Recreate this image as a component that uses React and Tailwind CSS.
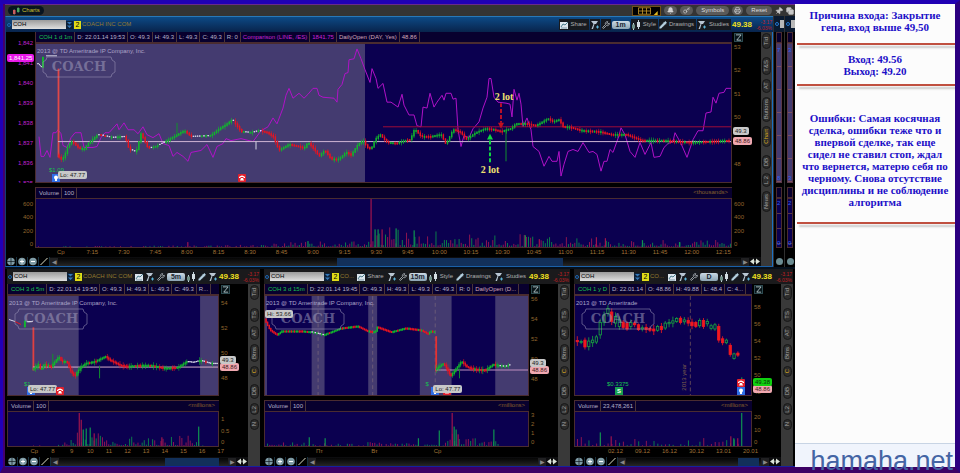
import React from 'react';
import { Bell, Copy, Key, Pencil, Pin, Printer, Wrench } from 'lucide-react';

const rand = (n) => {
  const v = Math.sin(n * 127.1 + 11.7) * 43758.5453;
  return v - Math.floor(v);
};

const at = (path, x) => {
  for (let i = 1; i < path.length; i++) {
    if (x <= path[i][0]) {
      const [x0, y0] = path[i - 1];
      const [x1, y1] = path[i];
      return y0 + ((y1 - y0) * (x - x0)) / (x1 - x0 || 1);
    }
  }
  return path[path.length - 1][1];
};

const mainPrice = [[58, 158], [61, 161], [64, 155], [67, 146], [71, 142], [78, 149], [83, 150], [88, 143], [97, 135], [110, 138], [124, 137], [128, 150], [135, 153], [140, 134], [147, 149], [155, 147], [163, 143], [175, 136], [183, 131], [190, 137], [210, 136], [217, 130], [225, 125], [231, 120], [235, 125], [240, 132], [250, 133], [258, 131], [266, 133], [272, 137], [278, 151], [288, 145], [297, 147], [303, 149], [307, 143], [313, 150], [318, 157], [324, 151], [330, 160], [338, 160], [345, 153], [350, 156], [357, 145], [362, 141], [366, 148], [370, 150], [374, 140], [379, 135], [386, 143], [395, 144], [405, 141], [410, 140], [412, 131], [415, 131], [420, 137], [430, 137], [440, 135], [445, 145], [452, 130], [460, 133], [465, 140], [475, 133], [485, 129], [492, 130], [500, 132], [510, 129], [515, 124], [525, 124], [535, 126], [547, 119], [552, 122], [558, 120], [562, 127], [570, 128], [580, 131], [597, 132], [610, 135], [625, 135], [640, 141], [660, 141], [675, 142], [690, 143], [710, 142], [730, 141]];

const comparison = [[38, 137], [40, 157], [43, 157], [46, 151], [49, 158], [52, 133], [55, 133], [57, 130], [60, 134], [62, 146], [66, 148], [70, 138], [74, 133], [80, 133], [83, 148], [92, 148], [96, 147], [100, 138], [104, 133], [108, 133], [116, 124], [118, 130], [123, 123], [127, 130], [133, 130], [137, 134], [142, 127], [146, 135], [152, 138], [158, 134], [162, 144], [168, 146], [172, 157], [176, 153], [182, 157], [187, 162], [190, 153], [200, 151], [206, 145], [212, 158], [216, 147], [222, 144], [225, 139], [230, 141], [240, 139], [252, 142], [260, 131], [267, 127], [272, 118], [276, 124], [282, 108], [285, 95], [288, 88], [292, 98], [298, 93], [303, 98], [307, 94], [312, 88], [316, 88], [318, 95], [322, 97], [333, 98], [336, 102], [337, 89], [341, 84], [344, 73], [347, 72], [348, 59], [353, 58], [356, 48], [360, 58], [364, 69], [369, 82], [371, 68], [375, 78], [377, 88], [382, 83], [386, 102], [390, 102], [397, 107], [401, 94], [403, 105], [408, 115], [413, 115], [416, 126], [420, 127], [422, 107], [426, 108], [429, 93], [433, 107], [436, 102], [441, 95], [443, 100], [445, 93], [450, 93], [452, 99], [455, 98], [457, 130], [460, 147], [463, 136], [468, 138], [472, 129], [478, 122], [482, 108], [486, 97], [488, 78], [490, 78], [493, 97], [497, 102], [505, 103], [509, 104], [511, 117], [513, 89], [516, 100], [518, 93], [520, 104], [522, 127], [526, 118], [530, 130], [532, 147], [538, 152], [543, 167], [548, 157], [551, 162], [556, 162], [558, 152], [560, 177], [563, 165], [567, 152], [572, 150], [577, 152], [582, 143], [588, 153], [592, 152], [596, 155], [600, 172], [603, 162], [606, 162], [609, 150], [612, 153], [618, 136], [620, 128], [624, 135], [629, 152], [634, 158], [639, 143], [644, 155], [650, 143], [653, 158], [659, 157], [663, 148], [667, 144], [672, 142], [674, 133], [680, 144], [686, 158], [692, 140], [697, 131], [702, 131], [705, 113], [710, 112], [712, 97], [715, 103], [718, 93], [723, 92], [725, 88], [730, 88]];

const fivePrice = [[33, 369], [38, 365], [40, 371], [43, 365], [47, 366], [50, 368], [55, 361], [58, 357], [61, 362], [66, 362], [70, 372], [74, 377], [79, 369], [85, 364], [95, 362], [105, 357], [110, 361], [120, 366], [127, 367], [140, 366], [150, 366], [165, 369], [178, 368], [187, 362], [193, 363], [200, 361], [210, 364], [218, 364]];

const fifteenBefore = [[264, 322], [268, 330], [275, 335], [280, 331], [300, 331], [310, 332], [322, 335], [335, 330], [340, 328], [356, 326], [366, 331], [374, 332], [376, 327], [390, 332], [405, 328], [420, 330], [427, 334], [430, 331], [434, 332]];
const fifteenAfter = [[436, 369], [443, 364], [447, 371], [450, 377], [455, 370], [461, 362], [467, 368], [475, 370], [485, 371], [493, 365], [497, 366], [505, 367], [511, 365]];

// top, bottom, direction of each daily body
const daily = [[223, 227, 0], [226, 229, 1], [222, 243, 0], [225, 242, 1], [222, 230, 1], [212, 228, 1], [168, 206, 1], [145, 168, 1], [125, 140, 1], [136, 165, 0], [150, 170, 1], [160, 180, 1], [167, 183, 0], [170, 188, 0], [168, 180, 1], [170, 175, 0], [175, 190, 0], [184, 188, 1], [183, 190, 0], [186, 192, 0], [188, 194, 0], [180, 192, 1], [180, 190, 0], [170, 185, 1], [168, 172, 1], [163, 170, 1], [156, 165, 1], [155, 168, 0], [160, 166, 1], [162, 170, 0], [167, 178, 0], [168, 180, 0], [162, 178, 1], [162, 180, 0], [165, 172, 1], [178, 186, 1], [175, 188, 1], [180, 222, 0], [218, 230, 0], [222, 230, 1], [238, 266, 0], [264, 278, 1], [262, 268, 0]];

const GREEN = '#12b52e';
const RED = '#e81420';

const Candles = ({ path, step = 2.1, seed = 1, wild = 2.5, whiteFrom = 0, whiteTo = 0 }) => {
  const items = [];
  const end = path[path.length - 1][0];
  let n = 0;
  for (let x = path[0][0]; x <= end; x += step, n++) {
    const y0 = at(path, x - step);
    const y1 = at(path, x);
    const r = rand(n + seed * 53);
    const slope = y1 - y0 + (r - 0.5) * 1.6;
    const quiet = x > whiteFrom && x < whiteTo && r > 0.35 && Math.abs(y1 - y0) < 1.2;
    const color = quiet ? '#d8d8e8' : slope < 0 ? GREEN : RED;
    const top = Math.min(y0, y1) - 0.8;
    const h = quiet ? 1.2 : Math.max(2, Math.abs(y1 - y0) + 1.2);
    const wick = quiet ? 0 : rand(n * 3 + seed) * wild;
    items.push(
      <g key={n} fill={color}>
        <rect x={x - 0.7} y={top} width="1.5" height={h} />
        <rect x={x - 0.2} y={top - wick} width="0.6" height={h + wick * 2} />
      </g>
    );
  }
  return <>{items}</>;
};

const Plot = ({ box, children }) => (
  <svg viewBox={box} preserveAspectRatio="none" className="block h-full w-full" aria-hidden="true">
    {children}
  </svg>
);

const Bars = ({ width, height, step, shape, peaks = [], seed = 1 }) => {
  const bars = [];
  let n = 0;
  for (let x = 2; x < width; x += step, n++) {
    const h = at(shape, x) * (0.1 + 1.1 * rand(n * 7 + seed) ** 2);
    if (h > 0.5) bars.push([x, h, rand(n + seed * 9) > 0.5]);
  }
  return (
    <Plot box={`0 0 ${width} ${height}`}>
      {bars.map(([x, h, up]) => (
        <rect key={x} x={x} y={height - h} width="1" height={h} fill={up ? '#0b7a4a' : '#8c1450'} />
      ))}
      {peaks.map(([x, h, up]) => (
        <rect key={`p${x}`} x={x} y={height - h} width="1.2" height={h} fill={up ? '#0f9450' : '#a0144c'} />
      ))}
    </Plot>
  );
};

const StudyIcon = () => (
  <svg viewBox="0 0 10 10" className="h-2.5 w-2.5 shrink-0">
    <path d="M1 1h7L6 4H4.500L3 9H1.500L3.500 4Z" fill="#b9c6d2" />
    <path d="M6 7h3M7.500 5.500v3" stroke="#5cb3d8" />
  </svg>
);

const StyleIcon = () => (
  <svg viewBox="0 0 10 10" className="h-2.5 w-2.5 shrink-0">
    <path d="M2.500 3v7M7.500 0v9" stroke="#c5d4dc" />
    <path d="M1 4.500h3v4H1z" fill="#6f8f86" />
    <path d="M6 2h3v5H6z" fill="#d3dde2" />
  </svg>
);

const ShareIcon = () => (
  <svg viewBox="0 0 10 10" className="h-2.5 w-2.5 shrink-0">
    <path d="M1 2h8v7H1z" fill="#dce6ee" />
    <path d="M2 7l2-3 2 1 3-3" fill="none" stroke="#4a7c8c" />
    <path d="M2 8h6" stroke="#7c98a4" />
  </svg>
);

const Phone = () => (
  <svg viewBox="0 0 8 8" className="block h-2 w-2">
    <rect width="8" height="8" rx="1" fill="#e3202c" />
    <path d="M1 3Q4 0 7 3V4H5.500V3h-3v1H1zM2 6.500 3 4h2l1 2.500z" fill="#fff" />
  </svg>
);

const Bulb = () => (
  <svg viewBox="0 0 8 8" className="block h-2 w-2">
    <rect width="8" height="8" fill="#2f6fe8" />
    <circle cx="4" cy="3.500" r="2" fill="#fff" />
    <path d="M3 5h2v2H3z" fill="#fff" />
  </svg>
);

const ToolButton = ({ icon, label, title }) => (
  <button title={title || label} className="flex h-[11px] min-w-2.5 items-center justify-center gap-0.5 bg-[#171a1f] text-[#b0b0b0]">
    {icon}
    {label && <span className="pr-0.5">{label}</span>}
  </button>
);

const Header = ({ id, company, interval, labels, blue }) => (
  <div className={`flex h-[15px] items-center ${blue ? 'bg-linear-to-b from-[#0c4a86] to-[#08244c]' : 'bg-[#1a1a1c]'}`}>
    <span className="mx-px h-1 w-1 shrink-0 rounded-full border border-[#1c67b4]" />
    <label htmlFor={id} className="sr-only">Symbol</label>
    <input id={id} defaultValue="COH" className="h-[9px] w-[54px] shrink-0 bg-linear-to-b from-[#9c9c9c] to-[#e0e0e0] px-px leading-[9px] text-black" />
    <button title="Symbols list" className="h-2 w-[7px] shrink-0 bg-[#0c2038]">
      <svg viewBox="0 0 7 8" className="h-2 w-[7px]"><path d="M1 1h5L3.500 3.500zM1 4.500h5L3.500 7z" fill="#3478b8" /></svg>
    </button>
    <span className="mx-px w-[7px] shrink-0 bg-[#e0dc18] text-center text-[7px] leading-[8px] text-black">2</span>
    <span className="min-w-0 flex-1 whitespace-nowrap text-[#967a30]">{company}</span>
    <div className="flex shrink-0 items-center gap-px">
      <ToolButton icon={<ShareIcon />} label={labels ? 'Share' : ''} title="Share" />
      <ToolButton icon={<StudyIcon />} title="Edit studies" />
      <ToolButton icon={<Wrench size={8} color="#d5dde2" />} title="Settings" />
      <button className="h-2 w-[18px] rounded-xs bg-linear-to-b from-[#cbd9e4] to-[#8ca4b4] text-center text-[7px] leading-[8px] font-bold text-[#182430]">{interval}</button>
      <ToolButton icon={<StyleIcon />} label={labels ? 'Style' : ''} title="Style" />
      <ToolButton icon={<Pencil size={8} color="#b8d4e4" fill="#b8d4e4" />} label={labels ? 'Drawings' : ''} title="Drawings" />
      <ToolButton icon={<StudyIcon />} label={labels ? 'Studies' : ''} title="Studies" />
    </div>
    <div className="flex w-[42px] shrink-0 items-center justify-between pl-px">
      <span className="text-[8px] font-bold text-[#f0e020]">49.38</span>
      <span className="pr-px text-right text-[5px] leading-[6px] text-[#c02024]">-3.17<br />-6.03%</span>
    </div>
  </div>
);

const Cells = ({ items }) => (
  <div className="flex h-[11px] min-w-0 overflow-hidden border-b border-l border-[#4a2c30] bg-[#08002e] pl-px whitespace-nowrap">
    {items.map(([text, color]) => (
      <span key={text} className={`border-r border-[#4a3438] px-0.5 leading-[10px] ${color || 'text-[#b4b0c8]'}`}>{text}</span>
    ))}
  </div>
);

const Axis = ({ values, className }) => (
  <div className={`flex flex-col justify-between overflow-hidden ${className}`}>
    {values.map((v) => <span key={v} className="block h-2 shrink-0 leading-[8px]">{v}</span>)}
  </div>
);

const Tabs = ({ items, blue }) => (
  <div className={`flex w-3 shrink-0 flex-col items-center gap-1 bg-[#393939] pt-px ${blue ? 'border-r border-[#1a70c4]' : ''}`}>
    {items.map(([name, height, active]) => (
      <button key={name} className={`flex w-[9px] items-center justify-center rounded-full border border-[#181818] bg-[#2c2c2c] leading-[7px] ${height} ${active ? 'text-[#d8a820]' : 'text-[#a4a4a4]'}`}>
        <span className="rotate-180 [writing-mode:vertical-rl]">{name}</span>
      </button>
    ))}
  </div>
);

const Corner = () => (
  <button title="Expand" className="ml-0.5 block h-[9px] w-[9px] border border-[#2c4a50] bg-[#081418]">
    <svg viewBox="0 0 8 8" className="block h-full w-full"><path d="M1 1h6L2 7h5" fill="none" stroke="#b8ccd0" /></svg>
  </button>
);

const ScrollRow = ({ thumb }) => (
  <div className="flex h-[9px] items-center bg-[#0c0c0e]">
    {['Crosshair', 'Zoom in', 'Zoom out', 'Line'].map((title, i) => (
      <button key={title} title={title} className="h-[9px] w-[11px] shrink-0 border-r border-[#18303c] bg-black">
        <svg viewBox="0 0 10 9" className="block h-full w-full">
          {i < 3 && <circle cx="5" cy="4.500" r="3.800" fill="#7f9ca6" />}
          {i === 0 && <path d="M5 0v9M1 4.500h8" stroke="#10181c" strokeWidth=".7" />}
          {i > 0 && i < 3 && <path d="M3 4.500h4" stroke="#fff" />}
          {i === 1 && <path d="M5 2.500v4" stroke="#fff" />}
          {i === 3 && <path d="M1.500 8 8.500 1" stroke="#e0e0c8" />}
        </svg>
      </button>
    ))}
    <button title="Scroll left" className="w-2 bg-[#202022] text-center leading-[8px] text-[#888]">◀</button>
    <div className={`flex h-2 flex-1 bg-linear-to-b from-[#060606] to-[#262626] ${thumb[0]}`}>
      {thumb[1] && <div className={`h-full bg-[#12305a] ${thumb[1]}`} />}
    </div>
    <button title="Scroll right" className="w-2 bg-[#202022] text-center leading-[8px] text-[#888]">▶</button>
    <button title="Fit" className="h-[9px] w-3">
      <svg viewBox="0 0 12 8" className="block h-full w-full"><path d="M1 4l4-3v2h2V1l4 3-4 3V5H5v2z" fill="#dce4d8" /><path d="M6 1v6" stroke="#000" /></svg>
    </button>
  </div>
);

const Logo = () => (
  <div className="absolute top-3 left-1.5 flex h-[22px] w-[74px] items-center justify-center">
    <svg viewBox="0 0 74 22" className="absolute h-full w-full">
      <path d="M5 1H69L70 4 73 6V16L70 18 69 21H5L4 18 1 16V6L4 4Z" fill="none" stroke="#9d96b8" strokeOpacity=".55" />
    </svg>
    <span className="font-['DejaVu_Serif'] text-[13px] leading-[14px] font-bold text-[#a8a4c0]/50">COACH</span>
  </div>
);

const Copyright = ({ short }) => (
  <span className="absolute top-[3px] left-px leading-[8px] whitespace-nowrap text-[#aca4c8]">
    2013 @ TD Ameritrade{short ? '' : ' IP Company, Inc.'}
  </span>
);

const Tag = ({ children, className }) => (
  <span className={`absolute rounded-xs px-0.5 leading-[8px] whitespace-nowrap ${className}`}>{children}</span>
);

const ChartPanel = ({ header, cells, left, right, tags, chart, chartHeight, volume, volHeight, volCell, volAxis, unit, leftVol, times, timesClass, thumb, tabs, blue, children }) => (
  <section className={`min-w-0 bg-black ${blue ? 'flex-1 border-t border-b border-l border-t-[#2878b8] border-b-[#1a60a8] border-l-[#123c74]' : 'border-b border-[#1420a0] px-0.5'}`}>
    <Header {...header} blue={blue} />
    <div className="flex">
      <div className="min-w-0 flex-1">
        <div className="flex">
          {left}
          <div className="min-w-0 flex-1">
            <Cells items={cells} />
            <div className={`relative overflow-hidden border border-[#4a2c30] bg-[#0b0050] ${chartHeight}`}>
              {chart}
              {children}
            </div>
          </div>
          <div className="relative w-[29px] shrink-0">
            <div className="flex h-[11px] items-center"><Corner /></div>
            {right}
            {tags}
          </div>
        </div>
        <div className="mt-1 flex">
          {leftVol}
          <div className="min-w-0 flex-1">
            <div className="relative border-t border-[#4a2c30]">
              <Cells items={[['Volume'], [volCell]]} />
              <span className="absolute top-0 right-1 leading-[9px] text-[#86602c]">&lt;{unit}&gt;</span>
            </div>
            <div className={`border border-t-0 border-[#4a2c30] bg-[#0b0050] ${volHeight}`}>{volume}</div>
          </div>
          <div className="w-[29px] shrink-0 pt-[11px]">{volAxis}</div>
        </div>
        <div className={`text-center leading-[9px] text-[#a07236] ${timesClass}`}>
          {times.map((t) => <span key={t}>{t}</span>)}
        </div>
        <ScrollRow thumb={thumb} />
      </div>
      <Tabs items={tabs} blue={blue} />
    </div>
  </section>
);

const MainChart = () => (
  <Plot box="35 43 695 140">
    <rect x="35" y="43" width="329" height="140" fill="#443b70" />
    <path d={'M' + comparison.map((p) => p.join(' ')).join('L')} fill="none" stroke="#b012c8" />
    <path d="M36 63h2l2 3h2M45 55h11" stroke="#d8d8e8" fill="none" />
    <path d="M42 67V56" stroke={GREEN} strokeWidth="2" />
    <path d="M57.500 68v90" stroke="#e04848" strokeWidth="1.800" />
    <path d="M57 142H730" stroke="#d0b4d4" />
    <path d="M382 127H730" stroke="#a00c38" />
    <path d="M255 142v8" stroke="#d8d8e8" />
    <path d="M505 130v32M176 123v14" stroke="#12902e" />
    <Candles path={mainPrice} whiteFrom={85} whiteTo={260} />
    <path d="M500 103v20" stroke="#b81028" strokeWidth="2" strokeDasharray="4 2" />
    <path d="M497 123h6l-3 6z" fill="#c01020" />
    <path d="M489 163v-22" stroke="#10d840" strokeWidth="2" strokeDasharray="4 2" />
    <path d="M486 140h6l-3-6z" fill="#10d840" />
  </Plot>
);

const FiveChart = () => (
  <Plot box="7 295 211 101">
    <path d="M7 295h71v101H7zM200 295h18v101h-18z" fill="#443b70" />
    <path d="M8 319l6 2M26 321h6" stroke="#d8d8e8" fill="none" />
    <path d="M14 321l6 3" stroke={RED} />
    <path d="M24 327v-7" stroke={GREEN} strokeWidth="2" />
    <path d="M32.500 327v44" stroke="#e04040" strokeWidth="1.800" />
    <path d="M32 367.500H218" stroke="#d8b0cc" />
    <path d="M99 366v13M52 354v12" stroke="#12902e" />
    <Candles path={fivePrice} step={1.6} seed={5} wild={3} whiteFrom={188} whiteTo={218} />
  </Plot>
);

const FifteenChart = () => (
  <Plot box="263 295 265 101">
    <path d="M263 295h2v101h-2zM310 295h13v101h-13zM367 295h9v101h-9zM419 295h32v101h-32zM495 295h33v101h-33z" fill="#443b70" />
    <path d="M316.500 295v101M371.500 295v101M434.500 295v101" stroke="#6a5a78" strokeDasharray="4 3" />
    <path d="M435.500 336v36" stroke="#e83030" strokeWidth="1.800" />
    <path d="M435 370.500H528" stroke="#c090c0" />
    <path d="M459 370v9" stroke="#12902e" />
    <Candles path={fifteenBefore} step={1.6} seed={3} wild={0.6} whiteFrom={309} whiteTo={322} />
    <Candles path={fifteenAfter} step={1.6} seed={8} wild={3} whiteFrom={495} whiteTo={512} />
  </Plot>
);

const DailyChart = () => (
  <Plot box="27 87 534 303">
    <path d="M377 87v303" stroke="#5c4458" strokeWidth="3" strokeDasharray="12 8" />
    {daily.map(([top, bottom, up], i) => {
      const x = 34 + i * 11.6;
      const h = bottom - top;
      const w = 3 + rand(i + 4) * 10;
      return (
        <g key={i} stroke={up ? '#18a040' : '#f01820'} strokeWidth="2.500" fill={up ? '#0b0050' : '#f01820'}>
          <path d={`M${x} ${top - w}V${bottom + w}`} />
          <rect x={x - 3.5} y={top} width="7" height={h} />
        </g>
      );
    })}
    <path d="M533 336v14" stroke="#18b040" strokeWidth="3" />
  </Plot>
);

const SmallTabs = [['Tid', 'h-[15px]'], ['TS', 'mt-1 h-3.5'], ['AT', 'h-3.5'], ['Btns', 'h-[18px]'], ['C', 'h-[11px]', true], ['DB', 'mt-[3px] h-[15px]'], ['L2', 'h-3'], ['N', 'h-[11px]']];
const MainTabs = [['Tid', 'h-4'], ['T&S', 'mt-1 h-[18px]'], ['AT', 'h-3.5'], ['Buttons', 'h-[25px]'], ['Chart', 'h-[21px]', true], ['DB', 'mt-1 h-3.5'], ['L 2', 'h-3.5'], ['News', 'h-[21px]']];

const Sliver = ({ low, high }) => (
  <div className="flex w-[11px] flex-col border-l border-[#303030] bg-black px-0.5 leading-[8px] text-[#2c60f0]">
    <div className="-mx-0.5 flex h-4 items-center bg-[#0a1a30] pl-px"><span className="h-1 w-1 rounded-full border border-[#2478d0]" /><span className="ml-px h-2 w-1 bg-[#b8b8b8]" /></div>
    <div className="h-[11px] border border-[#4a2c30] bg-[#08002e]" />
    <div className="flex h-[140px] flex-col justify-between border border-[#5a3848] bg-[repeating-linear-gradient(#443b70_0_22px,#7a5060_22px_23px)] pt-0.5">
      <span>{high}</span><span>{low}</span>
    </div>
    <div className="mt-1 h-[11px] border border-[#4a2c30] bg-[#08002e]" />
    <div className="flex h-[50px] flex-col justify-between border border-[#4a2c30] bg-[repeating-linear-gradient(#0b0050_0_14px,#5a3848_14px_15px)]">
      <span>2</span><span>0</span>
    </div>
    <div className="mt-[10px] h-[7px] w-[7px] rounded-full bg-[#6c8c92]" />
  </div>
);

const PillButton = ({ children, title, className }) => (
  <button title={title} className={`flex h-[9px] items-center justify-center rounded-full bg-[#5a5a5a] leading-[9px] text-[#dcdcdc] ${className}`}>{children}</button>
);

const TopBar = () => (
  <div className="flex h-[11px] items-center justify-between bg-[#343434] pl-[3px]">
    <button className="flex h-[9px] items-center gap-0.5 rounded-full bg-[#081420] px-1 text-[#d0c030]">
      <svg viewBox="0 0 8 8" className="h-2 w-2"><path d="M1 3h2.500v4H1z" fill="#e05050" /><path d="M5 1h2.500v4H5z" fill="#30b050" /><path d="M2.200 2v6M6.200 0v6" stroke="#888" strokeWidth=".6" /></svg>
      Charts
    </button>
    <div className="flex items-center gap-[3px] pr-px">
      <button title="Grid layout" className="h-[10px] w-[29px] border border-[#705018] bg-black">
        <svg viewBox="0 0 28 10" className="block h-full w-full"><path d="M4 1h15v8H4zM9 1v8M14 1v8M4 5h15" fill="none" stroke="#c89a2c" /><path d="M28 5v5h-5z" fill="#e0b820" /></svg>
      </button>
      <PillButton title="Alerts" className="w-[13px]"><Bell size={7} fill="#d0d0d0" /></PillButton>
      <PillButton title="Tools" className="w-[13px]"><Key size={7} /></PillButton>
      <PillButton className="px-[5px]">Symbols</PillButton>
      <PillButton title="Print" className="w-[11px]"><Printer size={7} /></PillButton>
      <PillButton className="px-[5px]">Reset</PillButton>
      <button title="Pin"><Pin size={8} color="#c8c8c8" fill="#c8c8c8" className="rotate-45" /></button>
      <button title="Detach"><Copy size={8} color="#c8c8c8" fill="#c8c8c8" /></button>
    </div>
  </div>
);

const Rule = () => <hr className="ml-0.5 h-0.5 border-0 bg-[#c05040] shadow-[2px_3px_2px_#c8c8c8]" />;

const Notes = () => (
  <aside className="flex w-40 shrink-0 flex-col overflow-x-clip bg-[#fcfcfc] text-center font-['Liberation_Serif'] text-[11px] leading-3 font-bold text-[#1c10c8]">
    <p className="px-2 pt-[5px] pb-2.5">Причина входа: Закрытие гепа, вход выше 49,50</p>
    <Rule />
    <p className="pt-2 pb-[7px]">Вход: 49.56<br />Выход: 49.20</p>
    <Rule />
    <p className="px-1.5 pt-[26px] pb-3.5">Ошибки: Самая косячная сделка, ошибки теже что и впервой сделке, так еще сидел не ставил стоп, ждал что вернется, матерю себя по черному. Снова отсутствие дисциплины и не соблюдение алгоритма</p>
    <Rule />
    <footer className="relative mt-auto h-6 border-t border-[#c8d4e4] bg-[#f0f4fc] pt-1">
      <a href="#" className="block pr-0.5 text-right font-['Liberation_Sans'] text-[27px] leading-[27px] font-normal text-[#4464a4]">hamaha.net</a>
    </footer>
  </aside>
);

const green = 'text-[#18c050]';
const axisText = 'text-[#92662e]';
const grayTag = 'bg-[#c8c8c8] text-[#202020]';
const pinkTag = 'bg-[#f0a8b0] text-[#401820]';

export default function App() {
  return (
    <div className="flex min-h-screen border-t-4 border-r-[5px] border-b-[6px] border-l-[3px] border-t-[#2000b4] border-r-[#2c0080] border-b-[#3c0064] border-l-[#2000b8] bg-[#44006c] pl-0.5 font-['Liberation_Sans',Arial,sans-serif] text-[6px] leading-[9px]">
      <main className="min-w-0 flex-1 border-t border-[#6a2a8a] bg-[#06101c]">
        <TopBar />
        <div className="flex">
          <ChartPanel
            blue
            header={{ id: 'main-symbol', company: 'COACH INC COM', interval: '1m', labels: true }}
            cells={[['COH 1 d 1m', green], ['D: 22.01.14 19:53'], ['O: 49.3'], ['H: 49.3'], ['L: 49.3'], ['C: 49.3'], ['R: 0'], ['Comparison (LINE, /ES)', 'text-[#c424d4]'], ['1841.75', 'text-[#c424d4]'], ['DailyOpen (DAY, Yes)', 'text-[#d0a8b8]'], ['48.86', 'text-[#d0a8b8]']]}
            left={
              <div className="relative w-[29px] shrink-0 overflow-hidden pt-[11px] text-right text-[#c020d0]">
                <Axis values={['1,842', '1,841', '1,840', '1,839', '1,838', '1,837', '1,836', '1,835']} className="-my-1 h-[148px] pr-0.5" />
                <Tag className="top-[22px] left-px bg-[#e818e8] text-white">1,841.25</Tag>
              </div>
            }
            right={<Axis values={[53, 52, 51, 50, 49, 48]} className={`h-[125px] pl-0.5 ${axisText}`} />}
            tags={<><Tag className={`top-[95px] left-px ${grayTag}`}>49.3</Tag><Tag className={`top-[105px] left-px ${pinkTag}`}>48.86</Tag></>}
            chartHeight="h-[140px]"
            chart={<MainChart />}
            volCell="100"
            unit="thousands"
            volHeight="h-[49px]"
            volume={
              <Bars width={694} height={49} step={2.1} seed={4}
                shape={[[0, 0.6], [150, 1.5], [230, 2], [235, 4], [270, 5], [330, 7], [345, 17], [385, 16], [420, 13], [460, 12], [520, 9], [600, 6], [694, 6]]}
                peaks={[[151, 5, 0], [271, 6, 1], [334, 49, 0], [338, 18, 1], [341, 18, 1], [345, 18, 0], [359, 19, 1], [377, 17, 1], [488, 12, 1], [502, 8, 0], [559, 10, 0], [568, 9, 0], [605, 7, 1], [642, 5, 1]]} />
            }
            leftVol={<div className={`w-[29px] shrink-0 pt-[11px] text-right ${axisText}`}><Axis values={[600, 400, 200, 0]} className="h-[50px] pt-0.5 pr-0.5" /></div>}
            volAxis={<Axis values={[600, 400, 200, 0]} className={`h-[50px] pt-0.5 pl-0.5 ${axisText}`} />}
            times={['Cp', '7:15', '7:30', '7:45', '8:00', '8:15', '8:30', '8:45', '9:00', '9:15', '9:30', '9:45', '10:00', '10:15', '10:30', '10:45', '11:00', '11:15', '11:30', '11:45', '12:00', '12:15']}
            timesClass="grid grid-cols-[repeat(22,1fr)] pl-[39px] pr-[22px]"
            thumb={['pl-[37%]', 'w-[56%]']}
            tabs={MainTabs}
          >
            <Copyright />
            <Logo />
            <span className="absolute top-[34%] left-[66%] font-['Liberation_Serif'] text-[10px] leading-3 font-bold text-[#f0e070]">2 lot</span>
            <span className="absolute bottom-1.5 left-[64%] font-['Liberation_Serif'] text-[10px] leading-3 font-bold text-[#f0e070]">2 lot</span>
            <span className={`absolute bottom-[7px] left-[13px] ${green}`}>$1.09</span>
            <div className="absolute bottom-0 left-4"><Bulb /></div>
            <Tag className={`bottom-[3px] left-[22px] ${grayTag}`}>Lo: 47.77</Tag>
            <div className="absolute bottom-0 left-[29%]"><Phone /></div>
          </ChartPanel>
          <Sliver high="7" low="8" />
          <Sliver high="3" low="3" />
        </div>
        <div className="mt-0.5 grid grid-cols-[257fr_310fr_223fr]">
          <ChartPanel
            header={{ id: 'five-symbol', company: 'COACH INC COM', interval: '5m' }}
            cells={[['COH 3 d 5m', green], ['D: 22.01.14 19:50'], ['O: 49.3'], ['H: 49.3'], ['L: 49.3'], ['C: 49.3'], ['R...']]}
            right={<Axis values={[54, 52, 50, 48]} className={`h-[87px] pt-1 pl-0.5 ${axisText}`} />}
            tags={<><Tag className={`top-[79px] left-px ${pinkTag}`}>48.86</Tag><Tag className={`top-[72px] left-px ${grayTag}`}>49.3</Tag></>}
            chartHeight="h-[101px]"
            chart={<FiveChart />}
            volCell="100"
            unit="millions"
            volHeight="h-[35px]"
            volume={
              <Bars width={211} height={35} step={2.1} seed={6}
                shape={[[0, 0.3], [50, 1], [65, 8], [75, 18], [95, 14], [110, 8], [150, 8], [185, 10], [195, 1], [211, 0]]}
                peaks={[[71, 34, 0], [73, 27, 0], [75, 17, 1], [78, 18, 1], [82, 19, 1], [86, 13, 0], [154, 9, 0], [191, 20, 1]]} />
            }
            volAxis={<Axis values={[1, 0.5, 0]} className={`h-[35px] pt-1 pl-0.5 ${axisText}`} />}
            times={['Cp', '8', '9', '10', '11', '12', '13', '14', '15', '16', '17']}
            timesClass="grid grid-cols-[repeat(11,1fr)] pb-px pl-[18px] pr-[18px]"
            thumb={['pl-[44%]', 'w-[86%]']}
            tabs={SmallTabs}
          >
            <Copyright />
            <Logo />
            <span className={`absolute bottom-1.5 left-4 ${green}`}>$1</span>
            <div className="absolute bottom-0 left-[19px]"><Bulb /></div>
            <Tag className={`bottom-0.5 left-5 ${grayTag}`}>Lo: 47.77</Tag>
            <div className="absolute bottom-0 left-12"><Phone /></div>
          </ChartPanel>
          <ChartPanel
            header={{ id: 'fifteen-symbol', company: 'CO...', interval: '15m', labels: true }}
            cells={[['COH 3 d 15m', green], ['D: 22.01.14 19:45'], ['O: 49.3'], ['H: 49.3'], ['L: 49.3'], ['C: 49.3'], ['R: 0'], ['DailyOpen (D...', 'text-[#d0a8b8]']]}
            right={<Axis values={[56, 54, 52, 50, 48]} className={`h-[88px] pl-0.5 ${axisText}`} />}
            tags={<><Tag className={`top-[82px] left-px ${pinkTag}`}>48.86</Tag><Tag className={`top-[75px] left-px ${grayTag}`}>49.3</Tag></>}
            chartHeight="h-[101px]"
            chart={<FifteenChart />}
            volCell="100"
            unit="millions"
            volHeight="h-[35px]"
            volume={
              <Bars width={265} height={35} step={2.3} seed={2}
                shape={[[0, 6], [20, 4], [60, 2.5], [100, 3.5], [140, 2.5], [180, 1], [186, 12], [200, 12], [215, 6], [232, 10], [236, 0.4], [265, 0]]}
                peaks={[[44, 9, 1], [60, 8, 1], [154, 8, 1], [175, 16, 1], [188, 34, 0], [190, 20, 1], [192, 17, 1], [194, 12, 0], [230, 17, 1]]} />
            }
            volAxis={<Axis values={[3, 2, 1, 0]} className={`h-[35px] pl-0.5 ${axisText}`} />}
            times={['Пт', 'Вт', 'Ср']}
            timesClass="grid grid-cols-[55fr_55fr_71fr] pb-px pl-7 pr-[85px]"
            thumb={['', '']}
            tabs={SmallTabs}
          >
            <Copyright />
            <Logo />
            <Tag className={`top-3.5 left-0 ${grayTag}`}>Hi: 53.66</Tag>
            <span className={`absolute bottom-1.5 left-[61%] ${green}`}>$</span>
            <div className="absolute bottom-0 left-[63%] flex gap-1"><Bulb /><Phone /></div>
            <Tag className={`bottom-0.5 left-[64%] ${grayTag}`}>Lo: 47.77</Tag>
          </ChartPanel>
          <ChartPanel
            header={{ id: 'daily-symbol', company: 'CO...', interval: 'D' }}
            cells={[['COH 1 y D', green], ['D: 22.01.14'], ['O: 48.86'], ['H: 49.88'], ['L: 48.4'], ['C: 4...']]}
            right={<Axis values={[58, 56, 54, 52, 50, 48]} className={`h-[101px] pt-2 pl-0.5 ${axisText}`} />}
            tags={<><Tag className={`top-[101px] left-px ${pinkTag}`}>48.86</Tag><Tag className="top-[94px] left-px bg-[#10d010] text-[#083008]">49.38</Tag></>}
            chartHeight="h-[101px]"
            chart={<DailyChart />}
            volCell="23,478,261"
            unit="millions"
            volHeight="h-[35px]"
            volume={
              <Bars width={178} height={35} step={3.87} seed={7}
                shape={[[0, 8], [40, 7], [80, 5], [100, 2], [125, 7], [165, 8], [167, 0], [178, 0]]}
                peaks={[[25, 14, 1], [36, 10, 0], [157, 10, 0], [160, 8, 1], [164, 8, 0], [168, 34, 1]]} />
            }
            volAxis={<Axis values={[20, 10, 0]} className={`h-[35px] pt-0.5 pl-0.5 ${axisText}`} />}
            times={['02.12', '09.12', '16.12', '30.12', '13.01', '20.01']}
            timesClass="grid grid-cols-[repeat(6,1fr)] pb-px pl-7 pr-[17px]"
            thumb={['pl-[54%]', 'w-[90%]']}
            tabs={SmallTabs}
          >
            <Copyright short />
            <Logo />
            <span className={`absolute bottom-1.5 left-8 ${green}`}>$0.3375</span>
            <span className="absolute bottom-0 left-10 h-2 w-2 bg-[#18a050] text-center leading-[8px] font-bold text-white">S</span>
            <span className="absolute right-[62px] bottom-1 rotate-180 text-[#80604c] [writing-mode:vertical-rl]">2013 year</span>
            <div className="absolute right-1.5 bottom-0"><Phone /><Bulb /></div>
          </ChartPanel>
        </div>
      </main>
      <Notes />
    </div>
  );
}
